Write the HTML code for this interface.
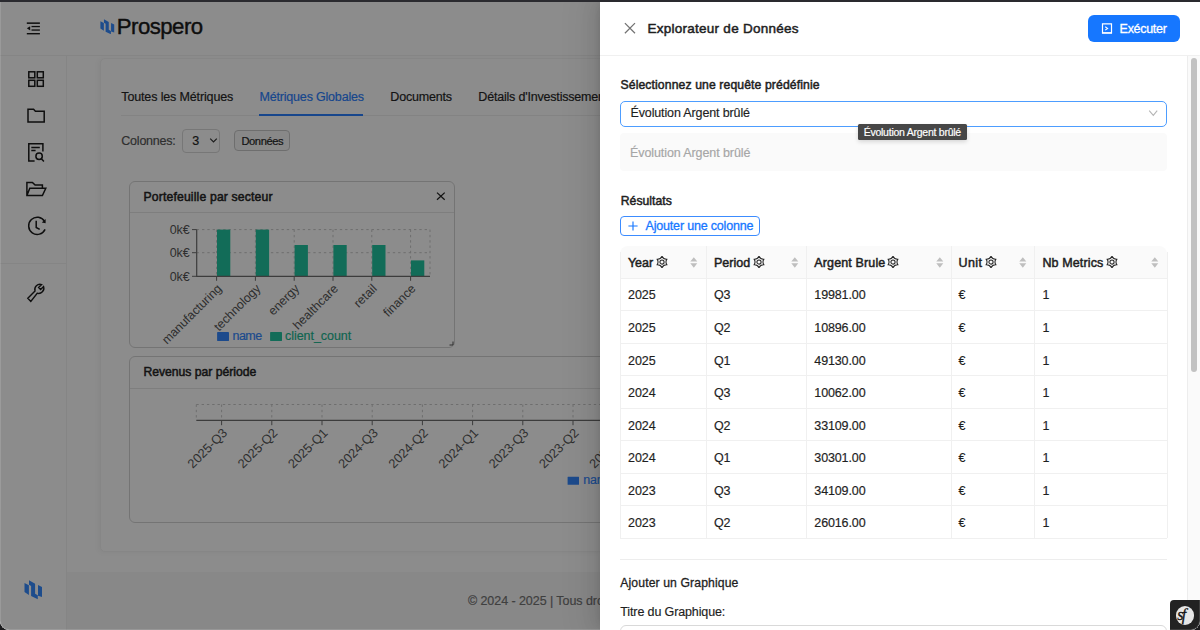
<!DOCTYPE html>
<html><head><meta charset="utf-8">
<style>
*{box-sizing:border-box;margin:0;padding:0}
html,body{width:1200px;height:630px;overflow:hidden;background:#1c1c1e;font-family:"Liberation Sans",sans-serif;color:#1f1f1f}
.abs{position:absolute}
.t{position:absolute;white-space:nowrap;line-height:1}
#win{position:absolute;left:0;top:0;width:1200px;height:630px;background:#fff;overflow:hidden;border-bottom-left-radius:9px;border-bottom-right-radius:9px}
#hdr{position:absolute;left:0;top:0;width:1200px;height:55.5px;background:#fff;border-bottom:1px solid #f2f2f2}
#side{position:absolute;left:0;top:55.5px;width:67px;height:580px;background:#fff;border-right:1px solid #f3f3f3}
#sidesep{position:absolute;left:0;top:262.5px;width:66px;height:1px;background:#f3f3f3}
#foot{position:absolute;left:67px;top:571.5px;width:1133px;height:60px;background:#f8f8f8}
#card{position:absolute;left:99.8px;top:57.6px;width:700px;height:494px;background:#fff;border:1px solid #f4f4f4;border-radius:5px;box-shadow:-2px 1px 5px rgba(0,0,0,0.04)}
.ch{position:absolute;background:#fff;border:1px solid #d4d4d4;border-radius:6px;overflow:hidden}
.chh{position:absolute;left:0;top:0;right:0;border-bottom:1px solid #e6e6e6}
#overlay{position:absolute;left:0;top:0;width:1200px;height:630px;background:rgba(0,0,0,0.45)}
#drawer{position:absolute;left:600px;top:0;width:600px;height:630px;background:#fff;box-shadow:-6px 0 16px 0 rgba(0,0,0,0.08),-3px 0 6px -4px rgba(0,0,0,0.12),-9px 0 28px 8px rgba(0,0,0,0.05);overflow:hidden}
.sel{position:absolute;border:1px solid #d9d9d9;border-radius:4px;background:#fff}
</style></head><body>
<div id="win">
<div id="hdr"></div>
<div id="side"></div>
<div id="sidesep"></div>
<div id="foot"></div>
<div id="card"></div>

<div class="abs" style="left:121px;top:114.8px;width:700px;height:1px;background:#eeeeee"></div>
<div class="abs" style="left:258.8px;top:113.6px;width:104.2px;height:2.2px;background:#2a80ff"></div>
<div class="sel" style="left:181.5px;top:129.4px;width:38.5px;height:23.2px"></div>
<svg class="abs" style="left:209px;top:137px" width="9" height="7" viewBox="0 0 9 7"><path d="M1.2 1.6 L4.5 4.9 L7.8 1.6" fill="none" stroke="#333" stroke-width="1.2"/></svg>
<div class="sel" style="left:234px;top:130.3px;width:56.3px;height:21.2px;border-color:#c9c9c9;background:#f7f7f7"></div>
<div class="ch" style="left:129.4px;top:180.8px;width:326.1px;height:167px"><div class="chh" style="height:31.6px"></div></div>
<svg class="abs" style="left:435px;top:191px" width="11" height="11" viewBox="0 0 11 11"><path d="M2 1.6 L9.7 8.8 M9.7 1.6 L2 8.8" stroke="#222" stroke-width="1.25"/></svg>
<svg class="abs" style="left:449px;top:341px" width="5" height="5" viewBox="0 0 5 5"><path d="M0.5 4 L4 4 L4 0.5" fill="none" stroke="#555" stroke-width="1"/></svg>
<div class="ch" style="left:129px;top:356px;width:700px;height:166.5px"><div class="chh" style="height:31.6px"></div></div>
<svg class="abs" style="left:0;top:0" width="600" height="630" viewBox="0 0 600 630"><g stroke="#c8c8c8" stroke-width="1" stroke-dasharray="2.4 2.9" fill="none"><path d="M196.7 229.6 H430 M196.7 252.7 H430 M430 229.6 V276"/><path d="M216.6 229.6 V276"/><path d="M255.4 229.6 V276"/><path d="M294.2 229.6 V276"/><path d="M333.0 229.6 V276"/><path d="M371.8 229.6 V276"/><path d="M410.6 229.6 V276"/></g><rect x="217.0" y="229.6" width="13.3" height="46.70000000000002" fill="#22c5a0"/><rect x="255.8" y="229.6" width="13.3" height="46.70000000000002" fill="#22c5a0"/><rect x="294.59999999999997" y="245.0" width="13.3" height="31.30000000000001" fill="#22c5a0"/><rect x="333.4" y="245.0" width="13.3" height="31.30000000000001" fill="#22c5a0"/><rect x="372.2" y="245.0" width="13.3" height="31.30000000000001" fill="#22c5a0"/><rect x="411.0" y="260.4" width="13.3" height="15.900000000000034" fill="#22c5a0"/><path d="M196.7 229.6 V276.3 H430" fill="none" stroke="#6e6e6e" stroke-width="1.2"/><path d="M192 229.6 H196.7 M192 252.7 H196.7 M192 276.3 H196.7" stroke="#6e6e6e" stroke-width="1"/><path d="M216.6 276.3 V280.8" stroke="#6e6e6e" stroke-width="1"/><path d="M255.4 276.3 V280.8" stroke="#6e6e6e" stroke-width="1"/><path d="M294.2 276.3 V280.8" stroke="#6e6e6e" stroke-width="1"/><path d="M333.0 276.3 V280.8" stroke="#6e6e6e" stroke-width="1"/><path d="M371.8 276.3 V280.8" stroke="#6e6e6e" stroke-width="1"/><path d="M410.6 276.3 V280.8" stroke="#6e6e6e" stroke-width="1"/><text x="189.8" y="233.79999999999998" text-anchor="end" font-size="12.5" fill="#555" font-family="Liberation Sans">0k€</text><text x="189.8" y="256.9" text-anchor="end" font-size="12.5" fill="#555" font-family="Liberation Sans">0k€</text><text x="189.8" y="280.5" text-anchor="end" font-size="12.5" fill="#555" font-family="Liberation Sans">0k€</text><text transform="translate(219.4 286.2) rotate(-45)" text-anchor="end" font-size="12.4" fill="#555" font-family="Liberation Sans" dy="0.35em">manufacturing</text><text transform="translate(258.2 286.2) rotate(-45)" text-anchor="end" font-size="12.4" fill="#555" font-family="Liberation Sans" dy="0.35em">technology</text><text transform="translate(297.0 286.2) rotate(-45)" text-anchor="end" font-size="12.4" fill="#555" font-family="Liberation Sans" dy="0.35em">energy</text><text transform="translate(335.8 286.2) rotate(-45)" text-anchor="end" font-size="12.4" fill="#555" font-family="Liberation Sans" dy="0.35em">healthcare</text><text transform="translate(374.6 286.2) rotate(-45)" text-anchor="end" font-size="12.4" fill="#555" font-family="Liberation Sans" dy="0.35em">retail</text><text transform="translate(413.40000000000003 286.2) rotate(-45)" text-anchor="end" font-size="12.4" fill="#555" font-family="Liberation Sans" dy="0.35em">finance</text><rect x="217.1" y="332" width="11.9" height="9" rx="0.4" fill="#3488ff"/><rect x="270.1" y="332" width="11.9" height="9" rx="0.4" fill="#22c5a0"/><g stroke="#c8c8c8" stroke-width="1" stroke-dasharray="2.4 2.9" fill="none"><path d="M196.3 404.5 H600 M196.3 404.5 V420"/><path d="M221.6 404.5 V420"/><path d="M271.8 404.5 V420"/><path d="M322.0 404.5 V420"/><path d="M372.2 404.5 V420"/><path d="M422.4 404.5 V420"/><path d="M472.6 404.5 V420"/><path d="M522.8 404.5 V420"/><path d="M573.0 404.5 V420"/><path d="M623.2 404.5 V420"/></g><path d="M196.3 420.4 H600" stroke="#6e6e6e" stroke-width="1.2"/><path d="M221.6 420.4 V425.2" stroke="#6e6e6e" stroke-width="1"/><text transform="translate(224.9 430.5) rotate(-45)" text-anchor="end" font-size="12.8" fill="#555" font-family="Liberation Sans" dy="0.35em">2025-Q3</text><path d="M271.8 420.4 V425.2" stroke="#6e6e6e" stroke-width="1"/><text transform="translate(275.1 430.5) rotate(-45)" text-anchor="end" font-size="12.8" fill="#555" font-family="Liberation Sans" dy="0.35em">2025-Q2</text><path d="M322.0 420.4 V425.2" stroke="#6e6e6e" stroke-width="1"/><text transform="translate(325.3 430.5) rotate(-45)" text-anchor="end" font-size="12.8" fill="#555" font-family="Liberation Sans" dy="0.35em">2025-Q1</text><path d="M372.2 420.4 V425.2" stroke="#6e6e6e" stroke-width="1"/><text transform="translate(375.5 430.5) rotate(-45)" text-anchor="end" font-size="12.8" fill="#555" font-family="Liberation Sans" dy="0.35em">2024-Q3</text><path d="M422.4 420.4 V425.2" stroke="#6e6e6e" stroke-width="1"/><text transform="translate(425.7 430.5) rotate(-45)" text-anchor="end" font-size="12.8" fill="#555" font-family="Liberation Sans" dy="0.35em">2024-Q2</text><path d="M472.6 420.4 V425.2" stroke="#6e6e6e" stroke-width="1"/><text transform="translate(475.9 430.5) rotate(-45)" text-anchor="end" font-size="12.8" fill="#555" font-family="Liberation Sans" dy="0.35em">2024-Q1</text><path d="M522.8 420.4 V425.2" stroke="#6e6e6e" stroke-width="1"/><text transform="translate(526.1 430.5) rotate(-45)" text-anchor="end" font-size="12.8" fill="#555" font-family="Liberation Sans" dy="0.35em">2023-Q3</text><path d="M573.0 420.4 V425.2" stroke="#6e6e6e" stroke-width="1"/><text transform="translate(576.3 430.5) rotate(-45)" text-anchor="end" font-size="12.8" fill="#555" font-family="Liberation Sans" dy="0.35em">2023-Q2</text><path d="M623.2 420.4 V425.2" stroke="#6e6e6e" stroke-width="1"/><text transform="translate(626.5 430.5) rotate(-45)" text-anchor="end" font-size="12.8" fill="#555" font-family="Liberation Sans" dy="0.35em">2023-Q1</text><rect x="567.6" y="476.7" width="11.4" height="8.1" rx="0.4" fill="#3488ff"/></svg>
<svg class="abs" style="left:0;top:0" width="70" height="630" viewBox="0 0 70 630">
<g fill="#1a1a1a">
<rect x="26.8" y="22.4" width="13.1" height="1.5"/>
<rect x="31.5" y="25.9" width="8.4" height="1.3"/>
<rect x="31.5" y="29.4" width="8.4" height="1.3"/>
<rect x="26.8" y="33" width="13.1" height="1.4"/>
<path d="M26.8 28.3 L30.2 26.2 L30.2 30.5 Z"/>
</g>
<g fill="none" stroke="#1a1a1a" stroke-width="1.5" stroke-linejoin="miter">
<rect x="28.8" y="71.8" width="6" height="6"/><rect x="37.3" y="71.8" width="6" height="6"/>
<rect x="28.8" y="80.3" width="6" height="6"/><rect x="37.3" y="80.3" width="6" height="6"/>
<path d="M28 109.3 H33.6 L35.4 111.2 H44.2 V122.1 H28 Z"/>
<path d="M34.6 161 H28.8 V143.8 H42.9 V151.4 M31.3 147.4 H39.8 M31.3 150.6 H35.6"/>
<circle cx="39.1" cy="156.3" r="3.2"/><path d="M41.4 158.7 L43.9 161.4"/>
<path d="M42.4 188 V185.1 H35.1 L32.4 182.4 H26.9 V195.6 H42.4 L45.8 188.2 H29.8 L26.9 195.6"/>
<path d="M44.6 221.3 A8.6 8.6 0 1 0 45.1 229.4"/><path d="M36.2 220.8 V227.5 L39.7 229.3"/>
<path d="M27.8 298.2 L35 291 A5.2 5.2 0 0 1 41.6 284.6 L38.6 287.6 L40.6 289.6 L43.6 286.6 A5.2 5.2 0 0 1 37.2 293.2 L30.8 301.4 Z" stroke-width="1.4"/>
</g>
<path d="M45.6 219.1 L45.6 223.2 L41.8 222.6 Z" fill="#1a1a1a"/>
</svg>
<svg class="abs" style="left:99.6px;top:18.65px" width="15.8" height="15.8" viewBox="0 0 20 20"><path fill="#368bff" d="M0.5 2.9 L4.9 5.2 V14.9 L0.5 12 Z M5 0.2 L11.1 3.7 V13.7 L13.8 15.2 V19.3 L7.1 16 V6 L5 4.8 Z M14 5 L18 7.1 V17 L14 15.7 Z"/></svg>
<svg class="abs" style="left:24.0px;top:580.0px" width="20.0" height="20.0" viewBox="0 0 20 20"><path fill="#368bff" d="M0.5 2.9 L4.9 5.2 V14.9 L0.5 12 Z M5 0.2 L11.1 3.7 V13.7 L13.8 15.2 V19.3 L7.1 16 V6 L5 4.8 Z M14 5 L18 7.1 V17 L14 15.7 Z"/></svg>
<div class="t" id="t0" style="left:116.80px;top:15.91px;font-size:22.2px;font-weight:400;color:#1a1a1a;letter-spacing:-0.533px;-webkit-text-stroke:0.4px #1a1a1a;">Prospero</div>
<div class="t" id="t1" style="left:121.30px;top:90.62px;font-size:12.5px;font-weight:400;color:#262626;letter-spacing:-0.139px;-webkit-text-stroke:0.18px #262626;">Toutes les Métriques</div>
<div class="t" id="t2" style="left:259.50px;top:90.62px;font-size:12.5px;font-weight:400;color:#2a80ff;letter-spacing:-0.188px;-webkit-text-stroke:0.18px #2a80ff;">Métriques Globales</div>
<div class="t" id="t3" style="left:390.30px;top:90.62px;font-size:12.5px;font-weight:400;color:#262626;letter-spacing:-0.192px;-webkit-text-stroke:0.18px #262626;">Documents</div>
<div class="t" id="t4" style="left:478.30px;top:90.62px;font-size:12.5px;font-weight:400;color:#262626;letter-spacing:-0.190px;-webkit-text-stroke:0.18px #262626;">Détails d'Investissements</div>
<div class="t" id="t5" style="left:121.30px;top:134.82px;font-size:12.5px;font-weight:400;color:#555555;letter-spacing:-0.225px;-webkit-text-stroke:0.18px #555555;">Colonnes:</div>
<div class="t" id="t6" style="left:192.30px;top:135.02px;font-size:12.5px;font-weight:400;color:#262626;letter-spacing:0.000px;-webkit-text-stroke:0.18px #262626;">3</div>
<div class="t" id="t7" style="left:241.50px;top:135.52px;font-size:11.2px;font-weight:400;color:#262626;letter-spacing:-0.466px;-webkit-text-stroke:0.18px #262626;">Données</div>
<div class="t" id="t8" style="left:143.50px;top:190.67px;font-size:12.2px;font-weight:400;color:#262626;letter-spacing:0.160px;-webkit-text-stroke:0.5px #262626;">Portefeuille par secteur</div>
<div class="t" id="t9" style="left:143.40px;top:365.67px;font-size:12.2px;font-weight:400;color:#262626;letter-spacing:-0.009px;-webkit-text-stroke:0.5px #262626;">Revenus par période</div>
<div class="t" id="t10" style="left:467.90px;top:594.92px;font-size:12.5px;font-weight:400;color:#737373;letter-spacing:-0.060px;-webkit-text-stroke:0.18px #737373;">© 2024 - 2025 | Tous droits réservés</div>
<div class="t" id="t11" style="left:232.60px;top:329.72px;font-size:12.5px;font-weight:400;color:#3488ff;letter-spacing:-0.594px;-webkit-text-stroke:0.18px #3488ff;">name</div>
<div class="t" id="t12" style="left:285.00px;top:329.72px;font-size:12.5px;font-weight:400;color:#1ab892;letter-spacing:-0.047px;-webkit-text-stroke:0.18px #1ab892;">client_count</div>
<div class="t" id="t13" style="left:583.30px;top:474.42px;font-size:12.5px;font-weight:400;color:#3488ff;letter-spacing:-0.200px;-webkit-text-stroke:0.18px #3488ff;">name</div>
<div id="overlay"></div>
<div id="drawer"><div class="abs" style="left:0;top:55px;width:600px;height:1px;background:#f0f0f0"></div>
<svg class="abs" style="left:23px;top:22px" width="14" height="13" viewBox="0 0 14 13"><path d="M1.9 1.1 L12 11.3 M12 1.1 L1.9 11.3" stroke="#737373" stroke-width="1.25"/></svg>
<div class="abs" style="left:488.2px;top:15px;width:91.6px;height:26.7px;background:#1677ff;border-radius:6px"></div>
<svg class="abs" style="left:500px;top:22px" width="14" height="13" viewBox="0 0 14 13"><path d="M2.5 1.9 H11.5 V10.9 H2.5 Z" fill="none" stroke="#fff" stroke-width="1.2"/><path d="M2 11 H12" stroke="#fff" stroke-width="1.3"/><path d="M5.2 4.7 L7.6 6.4 L5.2 8.1" fill="none" stroke="#fff" stroke-width="1.1"/></svg>
<div class="abs" style="left:20px;top:100.5px;width:547.3px;height:26.3px;border:1px solid #4d9dff;border-radius:5px"></div>
<svg class="abs" style="left:548px;top:109px" width="10" height="8" viewBox="0 0 10 8"><path d="M1.2 1.6 L5.3 6.3 L9.2 1.6" fill="none" stroke="#b5b5b5" stroke-width="1.1"/></svg>
<div class="abs" style="left:20px;top:132.6px;width:547.3px;height:38.2px;background:#fafafa;border-radius:4px"></div>
<div class="abs" style="left:20.2px;top:216.2px;width:139.8px;height:20px;border:1px solid #3c8cff;border-radius:4px"></div>
<svg class="abs" style="left:27.6px;top:220.7px" width="10" height="10" viewBox="0 0 10 10"><path d="M5 0.4 V9.6 M0.4 5 H9.6" stroke="#1677ff" stroke-width="1.15"/></svg>
<div class="abs" style="left:20.399999999999977px;top:246px;width:546.8000000000001px;height:32px;background:#fafafa;border-radius:8px 8px 0 0"></div>
<div class="abs" style="left:106.10000000000002px;top:246px;width:1px;height:292.4px;background:#f0f0f0"></div>
<div class="abs" style="left:205.79999999999995px;top:246px;width:1px;height:292.4px;background:#f0f0f0"></div>
<div class="abs" style="left:350.70000000000005px;top:246px;width:1px;height:292.4px;background:#f0f0f0"></div>
<div class="abs" style="left:434.20000000000005px;top:246px;width:1px;height:292.4px;background:#f0f0f0"></div>
<div class="abs" style="left:19.899999999999977px;top:252px;width:1px;height:286.4px;background:#f0f0f0"></div>
<div class="abs" style="left:566.7px;top:252px;width:1px;height:286.4px;background:#f0f0f0"></div>
<div class="abs" style="left:20.399999999999977px;top:277.50px;width:546.8000000000001px;height:1px;background:#f0f0f0"></div>
<div class="abs" style="left:20.399999999999977px;top:310.05px;width:546.8000000000001px;height:1px;background:#f0f0f0"></div>
<div class="abs" style="left:20.399999999999977px;top:342.60px;width:546.8000000000001px;height:1px;background:#f0f0f0"></div>
<div class="abs" style="left:20.399999999999977px;top:375.15px;width:546.8000000000001px;height:1px;background:#f0f0f0"></div>
<div class="abs" style="left:20.399999999999977px;top:407.70px;width:546.8000000000001px;height:1px;background:#f0f0f0"></div>
<div class="abs" style="left:20.399999999999977px;top:440.25px;width:546.8000000000001px;height:1px;background:#f0f0f0"></div>
<div class="abs" style="left:20.399999999999977px;top:472.80px;width:546.8000000000001px;height:1px;background:#f0f0f0"></div>
<div class="abs" style="left:20.399999999999977px;top:505.35px;width:546.8000000000001px;height:1px;background:#f0f0f0"></div>
<div class="abs" style="left:20.399999999999977px;top:537.90px;width:546.8000000000001px;height:1px;background:#f0f0f0"></div>
<svg class="abs" style="left:55.8px;top:256.3px" width="12" height="12" viewBox="0 0 12 12"><path d="M6.00 0.30 Q7.48 3.43 10.94 3.15 Q8.96 6.00 10.94 8.85 Q7.48 8.57 6.00 11.70 Q4.52 8.57 1.06 8.85 Q3.04 6.00 1.06 3.15 Q4.52 3.43 6.00 0.30 Z" fill="none" stroke="#262626" stroke-width="1.05" stroke-linejoin="round"/><circle cx="6" cy="6" r="2.1" fill="none" stroke="#262626" stroke-width="1.05"/></svg>
<svg class="abs" style="left:90.40000000000005px;top:257.2px" width="8" height="12" viewBox="0 0 8 12"><path d="M0.3 4.6 L3.8 0.2 L7.3 4.6 Z M0.3 6.3 L7.3 6.3 L3.8 10.8 Z" fill="#bfbfbf"/></svg>
<svg class="abs" style="left:152.59999999999997px;top:256.3px" width="12" height="12" viewBox="0 0 12 12"><path d="M6.00 0.30 Q7.48 3.43 10.94 3.15 Q8.96 6.00 10.94 8.85 Q7.48 8.57 6.00 11.70 Q4.52 8.57 1.06 8.85 Q3.04 6.00 1.06 3.15 Q4.52 3.43 6.00 0.30 Z" fill="none" stroke="#262626" stroke-width="1.05" stroke-linejoin="round"/><circle cx="6" cy="6" r="2.1" fill="none" stroke="#262626" stroke-width="1.05"/></svg>
<svg class="abs" style="left:190.7px;top:257.2px" width="8" height="12" viewBox="0 0 8 12"><path d="M0.3 4.6 L3.8 0.2 L7.3 4.6 Z M0.3 6.3 L7.3 6.3 L3.8 10.8 Z" fill="#bfbfbf"/></svg>
<svg class="abs" style="left:287.40000000000003px;top:256.3px" width="12" height="12" viewBox="0 0 12 12"><path d="M6.00 0.30 Q7.48 3.43 10.94 3.15 Q8.96 6.00 10.94 8.85 Q7.48 8.57 6.00 11.70 Q4.52 8.57 1.06 8.85 Q3.04 6.00 1.06 3.15 Q4.52 3.43 6.00 0.30 Z" fill="none" stroke="#262626" stroke-width="1.05" stroke-linejoin="round"/><circle cx="6" cy="6" r="2.1" fill="none" stroke="#262626" stroke-width="1.05"/></svg>
<svg class="abs" style="left:335.7px;top:257.2px" width="8" height="12" viewBox="0 0 8 12"><path d="M0.3 4.6 L3.8 0.2 L7.3 4.6 Z M0.3 6.3 L7.3 6.3 L3.8 10.8 Z" fill="#bfbfbf"/></svg>
<svg class="abs" style="left:384.8px;top:256.3px" width="12" height="12" viewBox="0 0 12 12"><path d="M6.00 0.30 Q7.48 3.43 10.94 3.15 Q8.96 6.00 10.94 8.85 Q7.48 8.57 6.00 11.70 Q4.52 8.57 1.06 8.85 Q3.04 6.00 1.06 3.15 Q4.52 3.43 6.00 0.30 Z" fill="none" stroke="#262626" stroke-width="1.05" stroke-linejoin="round"/><circle cx="6" cy="6" r="2.1" fill="none" stroke="#262626" stroke-width="1.05"/></svg>
<svg class="abs" style="left:418.90000000000003px;top:257.2px" width="8" height="12" viewBox="0 0 8 12"><path d="M0.3 4.6 L3.8 0.2 L7.3 4.6 Z M0.3 6.3 L7.3 6.3 L3.8 10.8 Z" fill="#bfbfbf"/></svg>
<svg class="abs" style="left:506.3px;top:256.3px" width="12" height="12" viewBox="0 0 12 12"><path d="M6.00 0.30 Q7.48 3.43 10.94 3.15 Q8.96 6.00 10.94 8.85 Q7.48 8.57 6.00 11.70 Q4.52 8.57 1.06 8.85 Q3.04 6.00 1.06 3.15 Q4.52 3.43 6.00 0.30 Z" fill="none" stroke="#262626" stroke-width="1.05" stroke-linejoin="round"/><circle cx="6" cy="6" r="2.1" fill="none" stroke="#262626" stroke-width="1.05"/></svg>
<svg class="abs" style="left:551.1000000000001px;top:257.2px" width="8" height="12" viewBox="0 0 8 12"><path d="M0.3 4.6 L3.8 0.2 L7.3 4.6 Z M0.3 6.3 L7.3 6.3 L3.8 10.8 Z" fill="#bfbfbf"/></svg>
<div class="abs" style="left:20px;top:558.5px;width:547px;height:1px;background:#ededed"></div>
<div class="abs" style="left:20px;top:624.5px;width:547px;height:30px;border:1px solid #d9d9d9;border-radius:6px"></div>
<div class="abs" style="left:587px;top:56px;width:13px;height:574px;background:#fafafa;border-left:1px solid #ededed"></div>
<div class="abs" style="left:590.9px;top:58.1px;width:6.3px;height:314.3px;background:#c2c2c2;border-radius:3.15px"></div>
<div class="abs" style="left:258.2px;top:123.7px;width:108.6px;height:16px;background:#474747;border-radius:1.5px;box-shadow:0 2px 4px rgba(0,0,0,0.14)"></div></div>
<div class="abs" style="left:0;top:0;width:1200px;height:630px;pointer-events:none"><div class="t" id="t14" style="left:647.50px;top:21.67px;font-size:13.5px;font-weight:400;color:#1f1f1f;letter-spacing:0.257px;-webkit-text-stroke:0.5px #1f1f1f;">Explorateur de Données</div>
<div class="t" id="t15" style="left:1119.60px;top:22.62px;font-size:12.5px;font-weight:400;color:#ffffff;letter-spacing:-0.299px;-webkit-text-stroke:0.3px #ffffff;">Exécuter</div>
<div class="t" id="t16" style="left:620.50px;top:78.92px;font-size:12.2px;font-weight:400;color:#1f1f1f;letter-spacing:0.113px;-webkit-text-stroke:0.5px #1f1f1f;">Sélectionnez une requête prédéfinie</div>
<div class="t" id="t17" style="left:630.50px;top:107.42px;font-size:12.5px;font-weight:400;color:#1f1f1f;letter-spacing:-0.134px;-webkit-text-stroke:0.18px #1f1f1f;">Évolution Argent brûlé</div>
<div class="t" id="t18" style="left:630.00px;top:146.62px;font-size:12.5px;font-weight:400;color:#a6a6a6;letter-spacing:-0.091px;-webkit-text-stroke:0.18px #a6a6a6;">Évolution Argent brûlé</div>
<div class="t" id="t19" style="left:863.70px;top:126.71px;font-size:10.5px;font-weight:400;color:#ffffff;letter-spacing:-0.249px;-webkit-text-stroke:0.18px #ffffff;">Évolution Argent brûlé</div>
<div class="t" id="t20" style="left:620.80px;top:194.67px;font-size:12.2px;font-weight:400;color:#1f1f1f;letter-spacing:0.023px;-webkit-text-stroke:0.5px #1f1f1f;">Résultats</div>
<div class="t" id="t21" style="left:645.50px;top:220.02px;font-size:12.5px;font-weight:400;color:#1677ff;letter-spacing:-0.178px;-webkit-text-stroke:0.3px #1677ff;">Ajouter une colonne</div>
<div class="t" id="t22" style="left:620.30px;top:576.87px;font-size:12.2px;font-weight:400;color:#1f1f1f;letter-spacing:0.113px;-webkit-text-stroke:0.3px #1f1f1f;">Ajouter un Graphique</div>
<div class="t" id="t23" style="left:620.30px;top:606.32px;font-size:12.5px;font-weight:400;color:#1f1f1f;letter-spacing:-0.124px;-webkit-text-stroke:0.18px #1f1f1f;">Titre du Graphique:</div>
<div class="t" id="t24" style="left:627.90px;top:257.02px;font-size:12.5px;font-weight:400;color:#1f1f1f;letter-spacing:-0.022px;-webkit-text-stroke:0.5px #1f1f1f;">Year</div>
<div class="t" id="t25" style="left:713.90px;top:257.02px;font-size:12.5px;font-weight:400;color:#1f1f1f;letter-spacing:0.052px;-webkit-text-stroke:0.5px #1f1f1f;">Period</div>
<div class="t" id="t26" style="left:814.30px;top:257.02px;font-size:12.5px;font-weight:400;color:#1f1f1f;letter-spacing:0.138px;-webkit-text-stroke:0.5px #1f1f1f;">Argent Brule</div>
<div class="t" id="t27" style="left:958.50px;top:257.02px;font-size:12.5px;font-weight:400;color:#1f1f1f;letter-spacing:0.422px;-webkit-text-stroke:0.5px #1f1f1f;">Unit</div>
<div class="t" id="t28" style="left:1042.40px;top:257.02px;font-size:12.5px;font-weight:400;color:#1f1f1f;letter-spacing:0.130px;-webkit-text-stroke:0.5px #1f1f1f;">Nb Metrics</div>
<div class="t" id="t29" style="left:628.00px;top:289.42px;font-size:12.5px;font-weight:400;color:#1f1f1f;letter-spacing:-0.050px;-webkit-text-stroke:0.18px #1f1f1f;">2025</div>
<div class="t" id="t30" style="left:713.90px;top:289.42px;font-size:12.5px;font-weight:400;color:#1f1f1f;letter-spacing:-0.100px;-webkit-text-stroke:0.18px #1f1f1f;">Q3</div>
<div class="t" id="t31" style="left:814.30px;top:289.42px;font-size:12.5px;font-weight:400;color:#1f1f1f;letter-spacing:-0.120px;-webkit-text-stroke:0.18px #1f1f1f;">19981.00</div>
<div class="t" id="t32" style="left:958.50px;top:289.42px;font-size:12.5px;font-weight:400;color:#1f1f1f;letter-spacing:0.000px;-webkit-text-stroke:0.18px #1f1f1f;">€</div>
<div class="t" id="t33" style="left:1042.40px;top:289.42px;font-size:12.5px;font-weight:400;color:#1f1f1f;letter-spacing:0.000px;-webkit-text-stroke:0.18px #1f1f1f;">1</div>
<div class="t" id="t34" style="left:628.00px;top:321.97px;font-size:12.5px;font-weight:400;color:#1f1f1f;letter-spacing:-0.050px;-webkit-text-stroke:0.18px #1f1f1f;">2025</div>
<div class="t" id="t35" style="left:713.90px;top:321.97px;font-size:12.5px;font-weight:400;color:#1f1f1f;letter-spacing:-0.100px;-webkit-text-stroke:0.18px #1f1f1f;">Q2</div>
<div class="t" id="t36" style="left:814.30px;top:321.97px;font-size:12.5px;font-weight:400;color:#1f1f1f;letter-spacing:-0.120px;-webkit-text-stroke:0.18px #1f1f1f;">10896.00</div>
<div class="t" id="t37" style="left:958.50px;top:321.97px;font-size:12.5px;font-weight:400;color:#1f1f1f;letter-spacing:0.000px;-webkit-text-stroke:0.18px #1f1f1f;">€</div>
<div class="t" id="t38" style="left:1042.40px;top:321.97px;font-size:12.5px;font-weight:400;color:#1f1f1f;letter-spacing:0.000px;-webkit-text-stroke:0.18px #1f1f1f;">1</div>
<div class="t" id="t39" style="left:628.00px;top:354.52px;font-size:12.5px;font-weight:400;color:#1f1f1f;letter-spacing:-0.050px;-webkit-text-stroke:0.18px #1f1f1f;">2025</div>
<div class="t" id="t40" style="left:713.90px;top:354.52px;font-size:12.5px;font-weight:400;color:#1f1f1f;letter-spacing:-0.100px;-webkit-text-stroke:0.18px #1f1f1f;">Q1</div>
<div class="t" id="t41" style="left:814.30px;top:354.52px;font-size:12.5px;font-weight:400;color:#1f1f1f;letter-spacing:-0.120px;-webkit-text-stroke:0.18px #1f1f1f;">49130.00</div>
<div class="t" id="t42" style="left:958.50px;top:354.52px;font-size:12.5px;font-weight:400;color:#1f1f1f;letter-spacing:0.000px;-webkit-text-stroke:0.18px #1f1f1f;">€</div>
<div class="t" id="t43" style="left:1042.40px;top:354.52px;font-size:12.5px;font-weight:400;color:#1f1f1f;letter-spacing:0.000px;-webkit-text-stroke:0.18px #1f1f1f;">1</div>
<div class="t" id="t44" style="left:628.00px;top:387.07px;font-size:12.5px;font-weight:400;color:#1f1f1f;letter-spacing:-0.050px;-webkit-text-stroke:0.18px #1f1f1f;">2024</div>
<div class="t" id="t45" style="left:713.90px;top:387.07px;font-size:12.5px;font-weight:400;color:#1f1f1f;letter-spacing:-0.100px;-webkit-text-stroke:0.18px #1f1f1f;">Q3</div>
<div class="t" id="t46" style="left:814.30px;top:387.07px;font-size:12.5px;font-weight:400;color:#1f1f1f;letter-spacing:-0.120px;-webkit-text-stroke:0.18px #1f1f1f;">10062.00</div>
<div class="t" id="t47" style="left:958.50px;top:387.07px;font-size:12.5px;font-weight:400;color:#1f1f1f;letter-spacing:0.000px;-webkit-text-stroke:0.18px #1f1f1f;">€</div>
<div class="t" id="t48" style="left:1042.40px;top:387.07px;font-size:12.5px;font-weight:400;color:#1f1f1f;letter-spacing:0.000px;-webkit-text-stroke:0.18px #1f1f1f;">1</div>
<div class="t" id="t49" style="left:628.00px;top:419.62px;font-size:12.5px;font-weight:400;color:#1f1f1f;letter-spacing:-0.050px;-webkit-text-stroke:0.18px #1f1f1f;">2024</div>
<div class="t" id="t50" style="left:713.90px;top:419.62px;font-size:12.5px;font-weight:400;color:#1f1f1f;letter-spacing:-0.100px;-webkit-text-stroke:0.18px #1f1f1f;">Q2</div>
<div class="t" id="t51" style="left:814.30px;top:419.62px;font-size:12.5px;font-weight:400;color:#1f1f1f;letter-spacing:-0.120px;-webkit-text-stroke:0.18px #1f1f1f;">33109.00</div>
<div class="t" id="t52" style="left:958.50px;top:419.62px;font-size:12.5px;font-weight:400;color:#1f1f1f;letter-spacing:0.000px;-webkit-text-stroke:0.18px #1f1f1f;">€</div>
<div class="t" id="t53" style="left:1042.40px;top:419.62px;font-size:12.5px;font-weight:400;color:#1f1f1f;letter-spacing:0.000px;-webkit-text-stroke:0.18px #1f1f1f;">1</div>
<div class="t" id="t54" style="left:628.00px;top:452.17px;font-size:12.5px;font-weight:400;color:#1f1f1f;letter-spacing:-0.050px;-webkit-text-stroke:0.18px #1f1f1f;">2024</div>
<div class="t" id="t55" style="left:713.90px;top:452.17px;font-size:12.5px;font-weight:400;color:#1f1f1f;letter-spacing:-0.100px;-webkit-text-stroke:0.18px #1f1f1f;">Q1</div>
<div class="t" id="t56" style="left:814.30px;top:452.17px;font-size:12.5px;font-weight:400;color:#1f1f1f;letter-spacing:-0.120px;-webkit-text-stroke:0.18px #1f1f1f;">30301.00</div>
<div class="t" id="t57" style="left:958.50px;top:452.17px;font-size:12.5px;font-weight:400;color:#1f1f1f;letter-spacing:0.000px;-webkit-text-stroke:0.18px #1f1f1f;">€</div>
<div class="t" id="t58" style="left:1042.40px;top:452.17px;font-size:12.5px;font-weight:400;color:#1f1f1f;letter-spacing:0.000px;-webkit-text-stroke:0.18px #1f1f1f;">1</div>
<div class="t" id="t59" style="left:628.00px;top:484.72px;font-size:12.5px;font-weight:400;color:#1f1f1f;letter-spacing:-0.050px;-webkit-text-stroke:0.18px #1f1f1f;">2023</div>
<div class="t" id="t60" style="left:713.90px;top:484.72px;font-size:12.5px;font-weight:400;color:#1f1f1f;letter-spacing:-0.100px;-webkit-text-stroke:0.18px #1f1f1f;">Q3</div>
<div class="t" id="t61" style="left:814.30px;top:484.72px;font-size:12.5px;font-weight:400;color:#1f1f1f;letter-spacing:-0.120px;-webkit-text-stroke:0.18px #1f1f1f;">34109.00</div>
<div class="t" id="t62" style="left:958.50px;top:484.72px;font-size:12.5px;font-weight:400;color:#1f1f1f;letter-spacing:0.000px;-webkit-text-stroke:0.18px #1f1f1f;">€</div>
<div class="t" id="t63" style="left:1042.40px;top:484.72px;font-size:12.5px;font-weight:400;color:#1f1f1f;letter-spacing:0.000px;-webkit-text-stroke:0.18px #1f1f1f;">1</div>
<div class="t" id="t64" style="left:628.00px;top:517.27px;font-size:12.5px;font-weight:400;color:#1f1f1f;letter-spacing:-0.050px;-webkit-text-stroke:0.18px #1f1f1f;">2023</div>
<div class="t" id="t65" style="left:713.90px;top:517.27px;font-size:12.5px;font-weight:400;color:#1f1f1f;letter-spacing:-0.100px;-webkit-text-stroke:0.18px #1f1f1f;">Q2</div>
<div class="t" id="t66" style="left:814.30px;top:517.27px;font-size:12.5px;font-weight:400;color:#1f1f1f;letter-spacing:-0.120px;-webkit-text-stroke:0.18px #1f1f1f;">26016.00</div>
<div class="t" id="t67" style="left:958.50px;top:517.27px;font-size:12.5px;font-weight:400;color:#1f1f1f;letter-spacing:0.000px;-webkit-text-stroke:0.18px #1f1f1f;">€</div>
<div class="t" id="t68" style="left:1042.40px;top:517.27px;font-size:12.5px;font-weight:400;color:#1f1f1f;letter-spacing:0.000px;-webkit-text-stroke:0.18px #1f1f1f;">1</div></div>
<div class="abs" style="left:1170px;top:600px;width:30px;height:30px;background:#222;border-top-left-radius:4px"></div>
<div class="abs" style="left:1175.8px;top:606.4px;width:18.4px;height:18.4px;background:#e6e6e6;border-radius:50%"></div>
<div class="t" style="left:1177.2px;top:606.8px;font-family:'Liberation Serif';font-style:italic;font-weight:400;font-size:16px;color:#111;letter-spacing:-1.6px;-webkit-text-stroke:0.3px #111">sf</div>
</div>
<div class="abs" style="left:0;top:0;width:1200px;height:1.6px;background:#2a2a2f"></div>
<div class="abs" style="left:0;top:0;width:1200px;height:630px;border:1px solid rgba(255,255,255,0.13);border-top:none;border-radius:0 0 9px 9px;top:1.6px;height:628.4px"></div>
</body></html>
